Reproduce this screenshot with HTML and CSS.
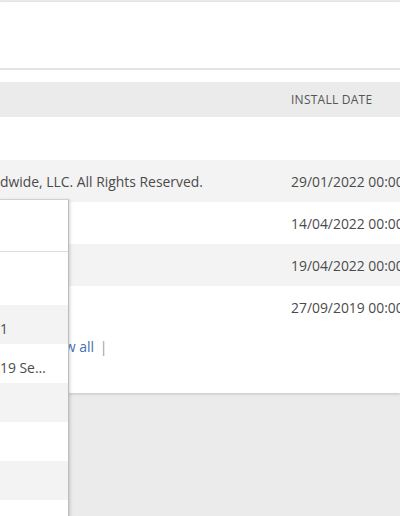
FILE: index.html
```html
<!DOCTYPE html>
<html>
<head>
    <title>Installed software</title>
    <link rel="stylesheet" href="styles.css">
</head>
<body>
    <div class="kort">
        <div class="verktoy">&nbsp;</div>
        <div class="tabell">
            <div class="rad hode">
                <div class="celle"></div>
                <div class="celle">INSTALL DATE</div>
            </div>
            <div class="rad">
                <div class="celle"></div>
                <div class="celle"></div>
            </div>
            <div class="rad">
                <div class="celle">dwide, LLC. All Rights Reserved.</div>
                <div class="celle">29/01/2022 00:00:00</div>
            </div>
            <div class="rad">
                <div class="celle"></div>
                <div class="celle">14/04/2022 00:00:00</div>
            </div>
            <div class="rad">
                <div class="celle"></div>
                <div class="celle">19/04/2022 00:00:00</div>
            </div>
            <div class="rad">
                <div class="celle"></div>
                <div class="celle">27/09/2019 00:00:00</div>
            </div>
        </div>
        <div class="bunn">
            <a href="#" class="lenke">View all</a> <span class="skille">|</span>
        </div>
    </div>

    <div class="nedtrekk">
        <div class="nedtrekk_topp"></div>
        <ul class="liste">
            <li>1</li>
            <li>19 Se…</li>
            <li></li>
            <li></li>
            <li></li>
            <li></li>
        </ul>
    </div>
</body>
</html>
```

FILE: styles.css
```css
html, body { height: 100%; }
body { margin: 0; padding-top: 2px; box-sizing: border-box; background-color: #ebebec; font-family: "Open Sans", sans-serif; font-size: 13.9px; color: #4b4b4b; overflow: hidden; position: relative; white-space: nowrap; }

.kort { background-color: white; box-shadow: 0 1px 3px rgba(0,0,0,0.18); }
.verktoy { height: 66px; border-bottom: 2px solid #e4e4e4; }

.tabell { margin-top: 12px; }
.rad { display: grid; grid-template-columns: 291px 1fr; height: 42px; align-items: center; }
.rad:nth-child(odd) { background-color: #f3f3f3; }
.rad.hode { height: 35px; background-color: #ebebeb; font-size: 12px; letter-spacing: 0.25px; color: #555; }
.rad:nth-child(2) { height: 43px; }
.celle { overflow: hidden; }

.bunn { height: 65px; box-sizing: border-box; padding: 9px 0 0 45px; line-height: 20px; font-size: 14px; }
.lenke { color: #4670b0; text-decoration: none; }
.skille { color: #9a9a9a; margin-left: 2px; }

.nedtrekk { position: absolute; left: 0; top: 199px; width: 68px; bottom: -20px; background-color: white; border-top: 1px solid #d2d2d2; border-right: 1px solid #bdbdbd; box-shadow: 1px 1px 3px rgba(0,0,0,0.18); }
.nedtrekk_topp { height: 51px; border-bottom: 1px solid #dddddd; }
.liste { list-style: none; margin: 0; padding: 53px 0 0 0; }
.liste li { height: 39px; box-sizing: border-box; padding-top: 14px; line-height: 20px; overflow: hidden; }
.liste li:nth-child(odd) { background-color: #f3f3f3; }
```
